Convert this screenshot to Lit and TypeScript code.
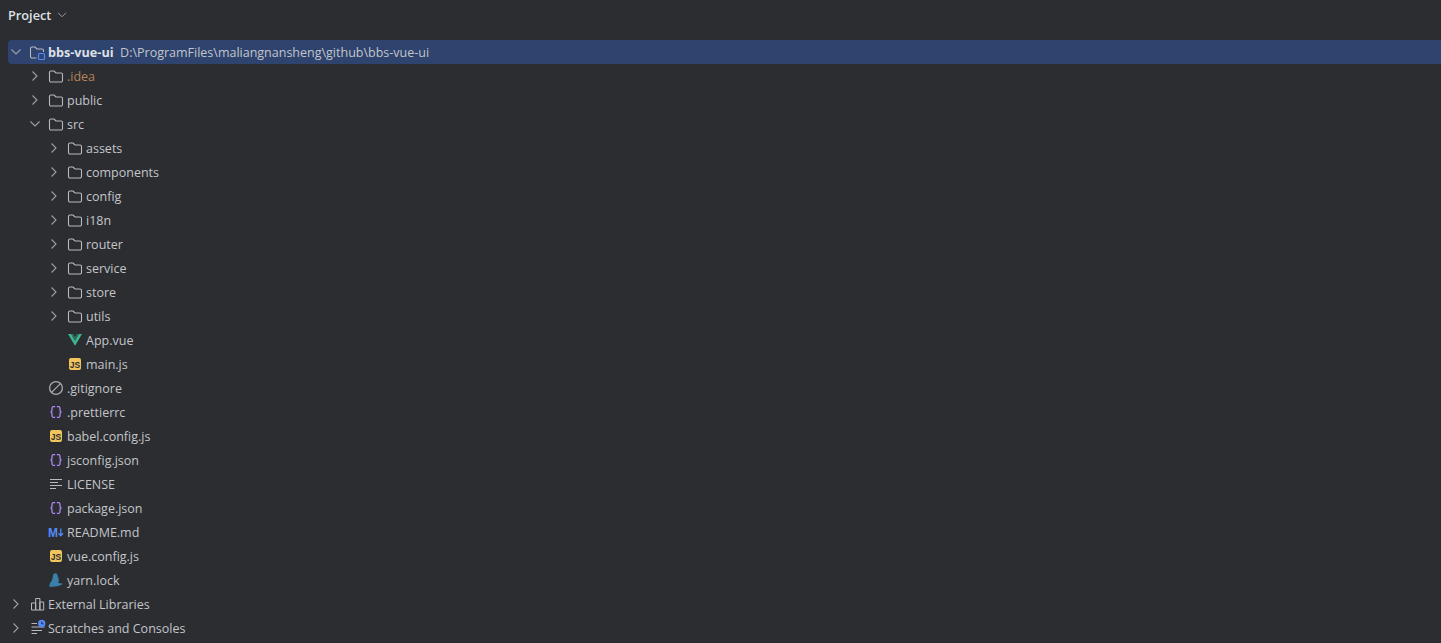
import { LitElement, html, css, svg } from "lit";
import { customElement } from "lit/decorators.js";

type Row = { d: number; name: string; arrow?: "r" | "d"; icon: string; cls?: string; hint?: string };

const rows: Row[] = [
  { d: 0, name: "bbs-vue-ui", arrow: "d", icon: "module", cls: "root", hint: "D:\\ProgramFiles\\maliangnansheng\\github\\bbs-vue-ui" },
  { d: 1, name: ".idea", arrow: "r", icon: "folder", cls: "ignored" },
  { d: 1, name: "public", arrow: "r", icon: "folder" },
  { d: 1, name: "src", arrow: "d", icon: "folder" },
  { d: 2, name: "assets", arrow: "r", icon: "folder" },
  { d: 2, name: "components", arrow: "r", icon: "folder" },
  { d: 2, name: "config", arrow: "r", icon: "folder" },
  { d: 2, name: "i18n", arrow: "r", icon: "folder" },
  { d: 2, name: "router", arrow: "r", icon: "folder" },
  { d: 2, name: "service", arrow: "r", icon: "folder" },
  { d: 2, name: "store", arrow: "r", icon: "folder" },
  { d: 2, name: "utils", arrow: "r", icon: "folder" },
  { d: 2, name: "App.vue", icon: "vue" },
  { d: 2, name: "main.js", icon: "js" },
  { d: 1, name: ".gitignore", icon: "ignore" },
  { d: 1, name: ".prettierrc", icon: "json" },
  { d: 1, name: "babel.config.js", icon: "js" },
  { d: 1, name: "jsconfig.json", icon: "json" },
  { d: 1, name: "LICENSE", icon: "text" },
  { d: 1, name: "package.json", icon: "json" },
  { d: 1, name: "README.md", icon: "md" },
  { d: 1, name: "vue.config.js", icon: "js" },
  { d: 1, name: "yarn.lock", icon: "yarn" },
  { d: 0, name: "External Libraries", arrow: "r", icon: "lib" },
  { d: 0, name: "Scratches and Consoles", arrow: "r", icon: "scratch" },
];

const G = "#b8bac0";

const icons: Record<string, unknown> = {
  folder: svg`<path d="M1.5 4.5A1.5 1.5 0 0 1 3 3h3l2 2h5a1.5 1.5 0 0 1 1.5 1.5V12.5a1.5 1.5 0 0 1-1.5 1.5H3A1.5 1.5 0 0 1 1.5 12.5z" fill="none" stroke="${G}" stroke-width="1.1"/>`,
  module: svg`<path d="M7.5 14H3A1.5 1.5 0 0 1 1.5 12.5V4.5A1.5 1.5 0 0 1 3 3h3l2 2h5a1.5 1.5 0 0 1 1.5 1.5V8" fill="none" stroke="${G}" stroke-width="1.1"/><rect x="9.5" y="9.5" width="6" height="6" rx="1" fill="#2e436e" stroke="#548af7" stroke-width="1.2"/>`,
  vue: svg`<path d="M1 2H4.2L8 8.8L11.8 2H15L8 13.8Z" fill="#3fb58f"/><path d="M4.2 2H6.3L8 5L9.7 2H11.8L8 8.8Z" fill="#2f6f5f"/>`,
  js: svg`<rect x="2" y="2" width="12" height="12" rx="2" fill="#f2c55c"/><text x="8" y="11.6" text-anchor="middle" font-family="'Liberation Sans',sans-serif" font-size="8.5" font-weight="700" fill="#2b2d30">JS</text>`,
  ignore: svg`<circle cx="8" cy="8" r="6.4" fill="none" stroke="#a8abb2" stroke-width="1.3"/><path d="M3.6 12.4L12.4 3.6" stroke="#a8abb2" stroke-width="1.3"/>`,
  json: svg`<path d="M7.2 2.6H5.6A1.6 1.6 0 0 0 4 4.2V6.4C4 7.4 3.4 8 2.4 8C3.4 8 4 8.6 4 9.6V11.8A1.6 1.6 0 0 0 5.6 13.4H7.2M8.8 2.6h1.6A1.6 1.6 0 0 1 12 4.2V6.4C12 7.4 12.6 8 13.6 8C12.6 8 12 8.6 12 9.6V11.8A1.6 1.6 0 0 1 10.4 13.4H8.8" fill="none" stroke="#b189f5" stroke-width="1.25"/>`,
  text: svg`<path d="M2 3.5h12M2 6.5h8M2 9.5h12M2 12.5h6" stroke="${G}" stroke-width="1"/>`,
  md: svg`<text x="0" y="12.5" font-family="'Liberation Sans',sans-serif" font-size="12" font-weight="700" fill="#548af7">M</text><path d="M12.8 4.5V11.8M10.5 9.3l2.3 2.5l2.3-2.5" fill="none" stroke="#548af7" stroke-width="1.3"/>`,
  yarn: svg`<path d="M1.3 14.7C1 12 2.5 10.5 3.5 9C4.5 7.5 4.6 5.5 5 3.5C5.3 1.8 6.5 1 7.8 1.3C9.2 1.6 9.6 3 9.8 4.3C10 5.5 10.8 6.2 10.8 8C10.8 9.2 10.4 10 10.4 11C11.8 11.4 13.4 11.2 14.8 11.8C14 13 12.3 13.3 11 13.7C8.5 14.5 4 15 1.3 14.7Z" fill="#3a80ab"/>`,
  lib: svg`<path d="M2.5 7h4.2v7H2.5zM6.7 2.5h4.2V14H6.7zM10.9 6h3.8v8h-3.8z" fill="none" stroke="${G}" stroke-width="1"/>`,
  scratch: svg`<path d="M2.5 3.5H8M2.5 7H15.5M2.5 10.5H13M2.5 13.5H8" stroke="${G}" stroke-width="1"/><circle cx="12.7" cy="3.5" r="3.7" fill="#548af7"/><path d="M12.7 1.6V3.8H14.6" fill="none" stroke="#2b2d30" stroke-width="1"/>`,
};

@customElement("app-root")
export class AppRoot extends LitElement {
  static styles = css`
    :host {
      display: block;
      height: 643px;
      overflow: hidden;
      background: #2b2d30;
      color: #bcbec4;
      font-family: "Open Sans", "Noto Sans", sans-serif;
      font-size: 12.5px;
    }
    .head {
      display: flex;
      align-items: center;
      gap: 4px;
      height: 30px;
      padding-left: 8px;
      color: #dfe1e5;
      font-weight: 600;
      font-size: 12.75px;
    }
    .tree { padding-top: 10px; }
    .row {
      display: flex;
      align-items: center;
      height: 24px;
      margin-left: 8px;
      white-space: nowrap;
      border-radius: 4px 0 0 4px;
    }
    .row.sel { background: #2e436e; }
    .arrow { width: 16px; height: 16px; flex: none; margin-right: 5px; }
    .icon { width: 16px; height: 16px; flex: none; margin-right: 3px; overflow: visible; }
    .name { color: #c3c5cb; }
    .root .name { font-weight: 700; font-size: 12.65px; color: #dfe1e5; }
    .ignored .name { color: #b5835a; }
    .hint { margin-left: 6.5px; color: #c3c5cb; }
    svg { display: block; }
  `;

  private chevron(dir?: "r" | "d") {
    if (!dir) return html`<span class="arrow"></span>`;
    const d = dir === "r" ? "M5.5 3.5L10 8L5.5 12.5" : "M3.5 5.5L8 10L12.5 5.5";
    return html`<svg class="arrow" viewBox="0 0 16 16"><path d=${d} fill="none" stroke="#9da0a8" stroke-width="1.1"/></svg>`;
  }

  render() {
    return html`
      <div class="head">
        <span>Project</span>
        <svg width="14" height="14" viewBox="0 0 16 16"><path d="M3.5 5.5L8 10L12.5 5.5" fill="none" stroke="#9da0a8" stroke-width="1.1"/></svg>
      </div>
      <div class="tree">
        ${rows.map(
          (r, i) => html`
            <div class="row ${i === 0 ? "sel" : ""} ${r.cls ?? ""}" style="padding-left:${r.d * 19}px">
              ${this.chevron(r.arrow)}
              <svg class="icon" viewBox="0 0 16 16">${icons[r.icon]}</svg>
              <span class="name">${r.name}</span>
              ${r.hint ? html`<span class="hint">${r.hint}</span>` : ""}
            </div>
          `
        )}
      </div>
    `;
  }
}
